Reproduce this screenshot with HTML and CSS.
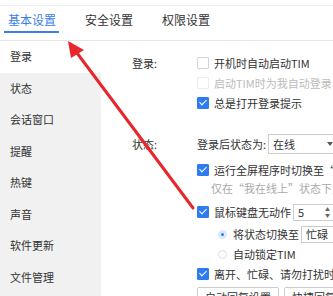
FILE: index.html
```html
<!DOCTYPE html>
<html lang="zh-CN">

<head>
    <meta charset="UTF-8">
    <meta name="viewport" content="width=device-width, initial-scale=1.0">
    <title>基本设置</title>
    <link rel="stylesheet" href="styles.css">
</head>

<body>

    <div class="tabs">
        <div class="tab active">基本设置</div>
        <div class="tab">安全设置</div>
        <div class="tab">权限设置</div>
    </div>

    <div class="main">
        <ul class="side">
            <li class="active">登录</li>
            <li>状态</li>
            <li>会话窗口</li>
            <li>提醒</li>
            <li>热键</li>
            <li>声音</li>
            <li>软件更新</li>
            <li>文件管理</li>
        </ul>

        <div class="content">
            <div class="group login">
                <div class="label">登录:</div>
                <div class="opts">
                    <div class="row"><span class="cb"></span>开机时自动启动TIM</div>
                    <div class="row disabled"><span class="cb off"></span>启动TIM时为我自动登录</div>
                    <div class="row"><span class="cb on"></span>总是打开登录提示</div>
                </div>
            </div>

            <div class="group status">
                <div class="label">状态:</div>
                <div class="opts">
                    <div class="row select-row">登录后状态为:<span class="select wide">在线<span class="caret"></span></span></div>
                    <div class="row r-full"><span class="cb on"></span>运行全屏程序时切换至“忙碌”状态</div>
                    <div class="row note">仅在“我在线上”状态下生效</div>
                    <div class="row r-idle"><span class="cb on"></span>鼠标键盘无动作<span class="spin">5<span class="arrows">&#9650;<br>&#9660;</span></span></div>
                    <div class="row sub r-radio1"><span class="radio on"></span>将状态切换至<span class="select">忙碌</span></div>
                    <div class="row sub"><span class="radio"></span>自动锁定TIM</div>
                    <div class="row"><span class="cb on"></span>离开、忙碌、请勿打扰时自动回复</div>
                    <div class="row buttons">
                        <button>自动回复设置</button>
                        <button>快捷回复设置</button>
                    </div>
                </div>
            </div>
        </div>
    </div>

    <svg class="arrow" width="333" height="296" viewBox="0 0 333 296">
        <line x1="193" y1="208" x2="77" y2="53" stroke="#e8262b" stroke-width="3" stroke-linecap="round" />
        <polygon points="68,41 84,50 71,58" fill="#e8262b" />
    </svg>

</body>

</html>
```

FILE: styles.css
```css
body {
    margin: 0;
    width: 333px;
    height: 296px;
    overflow: hidden;
    position: relative;
    background-color: #fff;
    font-family: "Noto Sans CJK SC", "Noto Sans", sans-serif;
    font-size: 11px;
    color: #333;
}

.tabs {
    display: flex;
    height: 34px;
    margin-top: 5px;
    border-top: 1px solid #f0f0f0;
    border-bottom: 1px solid #e6e6e6;
}

.tab {
    position: relative;
    padding: 0 10px 0 8px;
    margin-right: 11px;
    font-size: 12px;
    line-height: 28px;
    color: #333;
}

.tab.active {
    color: #3b7ee6;
}

.tab.active::after {
    content: "";
    position: absolute;
    left: 4px;
    right: 7px;
    top: 25px;
    height: 2px;
    background-color: #3b7ee6;
}

.main {
    display: flex;
    height: 255px;
    overflow: hidden;
}

.side {
    width: 101px;
    flex-shrink: 0;
    margin: 0;
    padding: 0;
    list-style: none;
    background-color: #f1f1f1;
}

.side li {
    height: 31.5px;
    line-height: 31.5px;
    padding-left: 10px;
}

.side li.active {
    background-color: #fff;
}

.content {
    flex: 1;
    min-width: 0;
    overflow: hidden;
    padding: 12px 0 0 31px;
    white-space: nowrap;
}

.group {
    display: flex;
}

.label {
    width: 65px;
    flex-shrink: 0;
    line-height: 20px;
}

.status {
    margin-top: 20px;
}

.status .label {
    line-height: 22px;
}

.row {
    display: flex;
    align-items: center;
    height: 20px;
}

.disabled {
    color: #bbb;
}

.cb {
    width: 10px;
    height: 10px;
    flex-shrink: 0;
    margin-right: 5px;
    border: 1px solid #d4d4d4;
    border-radius: 1px;
    background-color: #fff;
    position: relative;
}

.cb.off {
    border-color: #eee;
}

.cb.on {
    border-color: #2f7cf0;
    background-color: #2f7cf0;
}

.cb.on::after {
    content: "";
    position: absolute;
    left: 3px;
    top: 0px;
    width: 3px;
    height: 6px;
    border: solid #fff;
    border-width: 0 1.5px 1.5px 0;
    transform: rotate(45deg);
}

.select-row {
    height: 22px;
}

.select {
    display: inline-flex;
    align-items: center;
    flex-shrink: 0;
    height: 15px;
    margin-left: 2px;
    padding: 0 4px;
    width: 80px;
    border: 1px solid #ccc;
    background-color: #fff;
}

.select.wide {
    height: 18px;
    width: 64px;
}

.caret {
    margin-left: auto;
    margin-right: 4px;
    border-left: 3px solid transparent;
    border-right: 3px solid transparent;
    border-top: 4px solid #555;
}

.r-full {
    margin-top: 5px;
}

.note {
    height: 16px;
    padding-left: 14px;
    color: #aaa;
}

.r-idle {
    margin-top: 6px;
}

.spin {
    display: inline-flex;
    align-items: center;
    justify-content: space-between;
    flex-shrink: 0;
    width: 44px;
    height: 15px;
    margin-left: 2px;
    padding: 0 4px;
    border: 1px solid #ccc;
}

.arrows {
    font-size: 5px;
    line-height: 6px;
    color: #666;
    margin-right: 12px;
}

.sub {
    padding-left: 21px;
}

.r-radio1 {
    margin-top: 2px;
}

.radio {
    width: 9px;
    height: 9px;
    flex-shrink: 0;
    margin-right: 6px;
    border: 1px solid #ddd;
    border-radius: 50%;
    box-sizing: border-box;
}

.radio.on {
    border: 3px solid #dce9fb;
    background-color: #2f7cf0;
}

.buttons {
    margin-top: 2px;
    height: 22px;
    gap: 5px;
}

button {
    flex-shrink: 0;
    height: 20px;
    padding: 0 7px;
    font-family: inherit;
    font-size: 11px;
    color: #333;
    background-color: #fff;
    border: 1px solid #ccc;
    border-radius: 2px;
}

.arrow {
    position: absolute;
    left: 0;
    top: 0;
}
```
